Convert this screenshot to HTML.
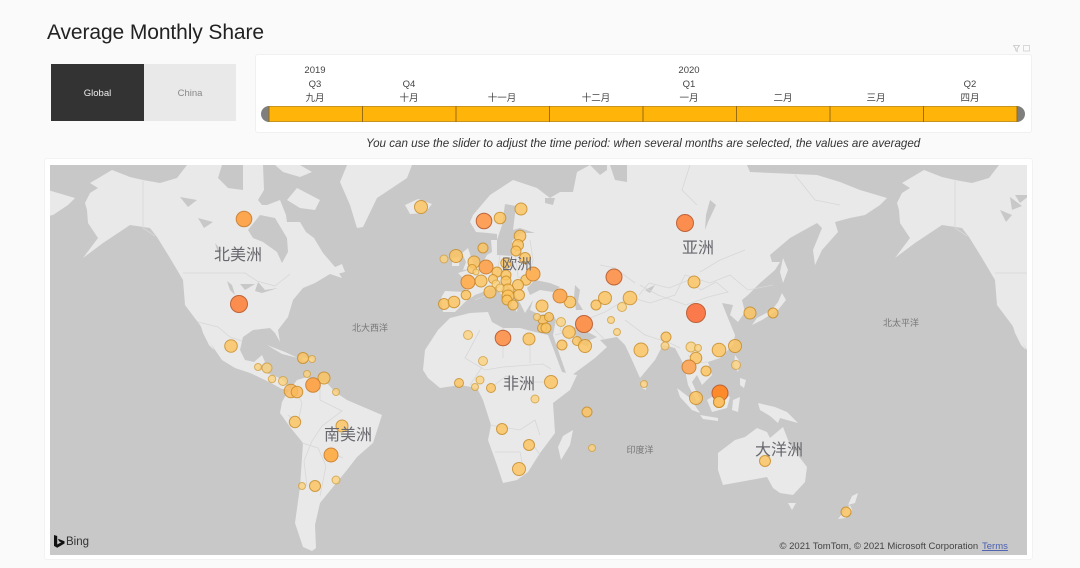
<!DOCTYPE html>
<html><head><meta charset="utf-8"><style>
html,body{margin:0;padding:0;width:1080px;height:568px;overflow:hidden;background:#fafafa}
body{font-family:"Liberation Sans","Noto Sans CJK SC",sans-serif}
#w{position:absolute;left:0;top:0;width:1080px;height:568px;filter:blur(.35px)}
.a{position:absolute}
.t{position:absolute;font-size:9.5px;color:#444;transform:translateX(-50%);white-space:nowrap;line-height:12px}
svg text{font-family:"Liberation Sans","Noto Sans CJK SC",sans-serif}
</style></head><body><div id="w">
<div class="a" style="left:47px;top:19px;font-size:21px;line-height:28px;color:#222;letter-spacing:-.1px;white-space:nowrap">Average Monthly Share</div>
<div class="a" style="left:51px;top:64px;width:93px;height:57px;background:#333;color:#eee;font-size:9.5px;line-height:60px;text-align:center">Global</div>
<div class="a" style="left:144px;top:64px;width:92px;height:57px;background:#e9e9e9;color:#888;font-size:9.5px;line-height:60px;text-align:center">China</div>
<div class="a" style="left:255px;top:54px;width:775px;height:77px;background:#fff;border:1px solid #f0f0f0;border-radius:3px"></div>
<svg class="a" style="left:1012px;top:44px" width="20" height="10"><path d="M1.500 1.500h6l-2.300 3v3l-1.400-1v-2z" fill="none" stroke="#c4c4c4" stroke-width=".8"/><rect x="11.500" y="1.500" width="6" height="5.500" fill="none" stroke="#d0d0d0" stroke-width=".8"/></svg>
<div class="t" style="left:315px;top:65px">2019</div><div class="t" style="left:315px;top:79px">Q3</div><div class="t" style="left:315px;top:93px">九月</div>
<div class="t" style="left:409px;top:79px">Q4</div><div class="t" style="left:409px;top:93px">十月</div>
<div class="t" style="left:502px;top:93px">十一月</div><div class="t" style="left:596px;top:93px">十二月</div>
<div class="t" style="left:689px;top:65px">2020</div><div class="t" style="left:689px;top:79px">Q1</div><div class="t" style="left:689px;top:93px">一月</div>
<div class="t" style="left:783px;top:93px">二月</div><div class="t" style="left:876px;top:93px">三月</div>
<div class="t" style="left:970px;top:79px">Q2</div><div class="t" style="left:970px;top:93px">四月</div>
<svg class="a" style="left:255px;top:100px" width="776" height="28">
<path d="M14 6a8 8 0 0 0 0 16z" fill="#7f7f7f"/>
<path d="M762 6a8 8 0 0 1 0 16z" fill="#7f7f7f"/>
<rect x="14" y="6" width="748" height="16" fill="#ffb40a"/>
<path d="M14 6.400h748M14 21.600h748" stroke="#b58a28" stroke-width=".8"/>
<path d="M107.500 6v16M201 6v16M294.500 6v16M388 6v16M481.500 6v16M575 6v16M668.500 6v16M14 6v16M762 6v16" stroke="#9a6c10" stroke-width="1"/>
</svg>
<div class="a" style="left:366px;top:136px;font-size:11.6px;line-height:15px;font-style:italic;color:#333;white-space:nowrap">You can use the slider to adjust the time period: when several months are selected, the values are averaged</div>
<div class="a" style="left:44px;top:158px;width:987px;height:400px;background:#fff;border:1px solid #f2f2f2;border-radius:3px"></div>
<svg class="a" style="left:0;top:0" width="1080" height="568" viewBox="0 0 1080 568">
<defs>
<clipPath id="m"><rect x="50" y="165" width="977" height="390"/></clipPath>
<g id="na">
<polygon points="85,203 90,193 98,188 90,183 112,170 130,177 143,180 160,183 177,178 187,165 222,165 218,178 228,188 243,190 243,165 263,165 264,190 258,200 262,205 267,205 280,200 286,215 287,222 300,222 306,232 314,238 323,253 335,267 342,278 330,274 315,283 303,288 293,300 288,317 278,330 280,342 275,333 270,328 253,330 243,337 240,350 245,360 254,362 262,355 265,362 259,368 266,373 275,376 283,380 290,389 282,389 267,381 250,373 235,368 222,360 213,347 200,325 185,305 183,280 170,258 157,237 150,228 130,225 115,235 103,243 83,258 98,238 88,223 87,210"/>
<polygon points="200,323 206,333 214,350 209,345 203,333"/>
<polygon points="267,345 285,352 298,358 282,354"/>
<polygon points="302,357 312,359 315,362 303,361"/>
<polygon points="297,188 320,200 315,210 300,208 287,200"/>
<polygon points="275,165 300,165 312,172 300,177 283,172"/>
<polygon points="333,268 342,264 345,272 337,274"/>
</g>
<g id="ea">
<polygon points="443,312 441,298 445,291 465,292 467,282 458,273 468,270 483,262 487,255 492,252 491,240 497,240 497,234 488,233 476,232 470,222 473,215 490,195 513,180 537,188 550,198 560,192 573,192 577,172 590,165 600,175 607,170 607,165 610,165 615,180 627,182 627,165 747,165 750,172 817,175 840,182 860,190 887,198 880,205 865,215 850,218 835,222 838,232 822,250 815,265 813,250 822,228 817,223 790,238 770,255 772,262 780,262 775,270 760,283 748,295 742,300 745,312 738,322 730,315 733,305 722,303 728,318 735,335 733,345 720,358 708,362 712,375 702,385 697,375 692,382 700,400 697,402 688,385 684,365 675,348 663,345 655,360 640,378 632,360 625,345 617,337 600,340 607,347 595,358 572,375 566,373 558,350 553,335 556,320 552,313 540,315 530,310 533,300 525,313 520,303 512,290 504,283 510,293 518,305 517,312 510,303 497,290 490,288 483,292 475,295 465,302 455,312"/>
<polygon points="783,258 788,270 783,283 780,272"/>
<polygon points="782,293 786,300 778,310 762,320 752,325 757,318 772,310 778,302"/>
</g>
</defs>
<rect x="50" y="165" width="977" height="390" fill="#c8c8c8"/>
<g clip-path="url(#m)">
<g fill="#e9e9e9">
<use href="#na"/><use href="#na" transform="translate(812,0)"/>
<use href="#ea"/><use href="#ea" transform="translate(-812,0)"/>
<polygon points="347,165 412,165 407,178 377,198 363,227 357,228 350,205 340,182"/>
<polygon points="405,205 418,199 432,204 425,213 410,214"/>
<polygon points="462,253 468,248 472,260 476,268 463,270 466,262"/>
<polygon points="452,258 460,257 459,266 452,266"/>
<polygon points="287,393 297,380 307,377 327,383 335,392 347,400 382,415 373,443 357,457 347,470 333,487 320,503 315,525 316,548 312,551 303,547 295,523 300,487 303,443 290,427 280,413 282,402"/>
<polygon points="423,370 425,350 438,330 450,318 470,313 488,312 492,322 503,328 520,328 535,332 548,335 552,345 562,372 577,375 570,390 553,403 555,433 540,453 528,472 517,480 503,483 497,465 488,440 491,425 483,400 477,388 460,385 440,388 428,378"/>
<polygon points="573,430 570,445 561,460 558,447 563,436"/>
<polygon points="641,380 646,384 646,390 642,388"/>
<polygon points="677,388 690,398 700,413 692,410 680,397"/>
<polygon points="707,400 718,393 730,397 727,408 712,412"/>
<polygon points="700,415 718,418 718,421 703,419"/>
<polygon points="733,400 740,397 738,412 732,410"/>
<polygon points="758,403 775,407 787,412 798,423 787,420 780,418 778,423 770,416 760,410"/>
<polygon points="735,355 740,362 738,372 734,366"/>
<polygon points="740,378 746,380 744,388 740,385"/>
<polygon points="718,453 735,440 745,437 757,428 767,432 770,438 783,427 790,445 807,467 805,482 793,495 780,493 773,488 767,477 745,481 723,485 718,470"/>
<polygon points="788,503 796,503 792,510"/>
<polygon points="858,493 855,503 848,505 852,496"/>
<polygon points="850,505 842,514 838,519 846,518 852,510"/>
</g>
<g fill="#c8c8c8">
<polygon points="248,230 260,215 275,218 287,238 288,252 282,263 277,252 263,242 253,238"/>
<polygon points="497,255 512,256 512,241 522,233 535,233 520,228 513,230 516,206 505,204 502,225 497,240"/>
<polygon points="545,198 555,198 553,205 545,203"/>
<polygon points="527,288 535,280 550,283 560,287 553,292 540,290 530,295"/>
<polygon points="575,285 580,290 578,302 583,310 576,310 574,298"/>
<polygon points="572,327 580,328 597,337 590,340 588,347 578,342"/>
<polygon points="227,281 232,285 235,295 230,290"/>
<polygon points="240,284 255,284 245,290"/>
<polygon points="258,282 265,290 278,288 262,293 255,291"/>
<polygon points="198,218 213,222 204,228"/>
<polygon points="180,197 197,200 188,207"/>
<polygon points="215,243 222,251 218,253"/>
<polygon points="645,290 655,285 650,293"/>
<polygon points="710,200 716,205 708,222 705,230 706,215"/>
<polygon points="1010,197 1022,206 1012,210"/>
<polygon points="1000,210 1012,215 1006,222"/>
<polygon points="1030,195 1015,195 1020,203"/>
</g>
<g fill="none" stroke="#d7d7d7" stroke-width=".8">
<path d="M143 181V228l12 8M183 273H245l12 8 18 5 15-12M198 322l20 5 12 10 12 4M257 366l4 5M288 389l8 2 6 12-4 20-10-8M320 385l0 15 12 6 10 5-20 15-10 15-8 20 3 25M325 450l18 8M302 443l16 5 8 18-6 30"/>
<path d="M475 300l10-4M500 255l-3 20 8 6M515 252l3 25 15 5M530 240l3 20-5 20M480 330l-15 28 20 12 18-3 40-3 8 5M503 328l0 30M530 335v28M470 385l12-18M491 388l15-12 20 6 18 0M490 425l30 5 15-10 5 15M495 452l25 0 3 15M530 440l10 15"/>
<path d="M555 335l30-8M575 345l-15-15 3-10M605 340l-20-20 20-8 25-15 20 6 25-8 10-20 25 8 20-8 18 15 25-5M640 285l18 10 28 10 22-8 20-5-12-10-15 8-12-10-20 8-20-5-10 12M625 320l20 15 25 8 10 5M688 355l8 8 12-1M840 205l-25-5-20-25M690 165l-8 25 15 15M745 250l-25 10-20 12M600 265l15 3 20 15"/>
<path d="M955 181V228l12 8M995 273H1030"/>
</g>
<g stroke-width="1">
<g fill="#fdc460" fill-opacity=".82" stroke="#c68a24" stroke-opacity=".8">
<circle cx="231" cy="346" r="6.300"/><circle cx="303" cy="358" r="5.500"/><circle cx="324" cy="378" r="6"/><circle cx="291" cy="391" r="6.800" fill="#fdb85a"/><circle cx="297" cy="392" r="5.800" fill="#fdb85a"/><circle cx="295" cy="422" r="5.700"/><circle cx="342" cy="426" r="6"/><circle cx="315" cy="486" r="5.500"/><circle cx="421" cy="207" r="6.500"/><circle cx="500" cy="218" r="5.800"/><circle cx="521" cy="209" r="6"/><circle cx="520" cy="236" r="5.800"/><circle cx="518" cy="245" r="5.500"/><circle cx="516" cy="251" r="5"/><circle cx="483" cy="248" r="5"/><circle cx="456" cy="256" r="6.500"/><circle cx="474" cy="262" r="6"/><circle cx="472" cy="269" r="4.500"/><circle cx="506" cy="263" r="5.200"/><circle cx="525" cy="258" r="5.500"/><circle cx="497" cy="272" r="5"/><circle cx="506" cy="275" r="5"/><circle cx="481" cy="281" r="6"/><circle cx="493" cy="279" r="4.500"/><circle cx="506" cy="281" r="5"/><circle cx="526" cy="280" r="5.200"/><circle cx="518" cy="285" r="5.500"/><circle cx="508" cy="290" r="6"/><circle cx="490" cy="292" r="6"/><circle cx="466" cy="295" r="4.800"/><circle cx="519" cy="295" r="5.500"/><circle cx="508" cy="296" r="6"/><circle cx="507" cy="300" r="5"/><circle cx="513" cy="305" r="5"/><circle cx="444" cy="304" r="5.500"/><circle cx="454" cy="302" r="5.800"/><circle cx="542" cy="306" r="6"/><circle cx="570" cy="302" r="5.800"/><circle cx="596" cy="305" r="5"/><circle cx="605" cy="298" r="6.500"/><circle cx="630" cy="298" r="6.800"/><circle cx="543" cy="320" r="4.800"/><circle cx="549" cy="317" r="4.500"/><circle cx="542" cy="328" r="4.500"/><circle cx="546" cy="328" r="5"/><circle cx="569" cy="332" r="6.300"/><circle cx="577" cy="341" r="4.500"/><circle cx="585" cy="346" r="6.500"/><circle cx="562" cy="345" r="5"/><circle cx="529" cy="339" r="6"/><circle cx="641" cy="350" r="7"/><circle cx="666" cy="337" r="5"/><circle cx="694" cy="282" r="6"/><circle cx="750" cy="313" r="6"/><circle cx="773" cy="313" r="5"/><circle cx="719" cy="350" r="6.800"/><circle cx="735" cy="346" r="6.500"/><circle cx="696" cy="358" r="5.800"/><circle cx="706" cy="371" r="5"/><circle cx="696" cy="398" r="6.500"/><circle cx="719" cy="402" r="5.500"/><circle cx="765" cy="461" r="5.500"/><circle cx="846" cy="512" r="5"/><circle cx="551" cy="382" r="6.500"/><circle cx="587" cy="412" r="5"/><circle cx="502" cy="429" r="5.500"/><circle cx="529" cy="445" r="5.500"/><circle cx="519" cy="469" r="6.500"/><circle cx="491" cy="388" r="4.500"/><circle cx="459" cy="383" r="4.500"/>
</g>
<g fill="#fbd27e" fill-opacity=".8" stroke="#cf9c3e" stroke-opacity=".75">
<circle cx="312" cy="359" r="3.500"/><circle cx="258" cy="367" r="3.500"/><circle cx="267" cy="368" r="5"/><circle cx="272" cy="379" r="3.700"/><circle cx="283" cy="381" r="4.500"/><circle cx="307" cy="374" r="3.500"/><circle cx="336" cy="392" r="3.500"/><circle cx="336" cy="480" r="4"/><circle cx="302" cy="486" r="3.500"/><circle cx="444" cy="259" r="4"/><circle cx="476" cy="272" r="3"/><circle cx="496" cy="284" r="4"/><circle cx="500" cy="288" r="4"/><circle cx="622" cy="307" r="4.500"/><circle cx="537" cy="317" r="3.500"/><circle cx="561" cy="322" r="4.500"/><circle cx="611" cy="320" r="3.500"/><circle cx="617" cy="332" r="3.500"/><circle cx="468" cy="335" r="4.500"/><circle cx="483" cy="361" r="4.500"/><circle cx="665" cy="346" r="4"/><circle cx="691" cy="347" r="5"/><circle cx="698" cy="348" r="3.500"/><circle cx="736" cy="365" r="4.500"/><circle cx="480" cy="380" r="4"/><circle cx="475" cy="387" r="3.500"/><circle cx="535" cy="399" r="4"/><circle cx="592" cy="448" r="3.500"/><circle cx="644" cy="384" r="3.500"/>
</g>
<g stroke="#c47a2a" stroke-opacity=".85">
<circle cx="244" cy="219" r="7.800" fill="#fca650"/><circle cx="331" cy="455" r="7" fill="#fdb050"/><circle cx="313" cy="385" r="7.300" fill="#fca650"/><circle cx="468" cy="282" r="7" fill="#fdb25a"/><circle cx="533" cy="274" r="7" fill="#fdb25a"/><circle cx="486" cy="267" r="7" fill="#fca85a"/><circle cx="560" cy="296" r="7" fill="#fbac5a"/><circle cx="689" cy="367" r="7" fill="#fbaa62"/>
</g>
<g stroke="#b85a30" stroke-opacity=".9">
<circle cx="239" cy="304" r="8.500" fill="#fb8d4e"/><circle cx="685" cy="223" r="8.500" fill="#fb8d4e"/><circle cx="696" cy="313" r="9.500" fill="#fa7a4c"/><circle cx="720" cy="393" r="8" fill="#ff8a2c"/><circle cx="584" cy="324" r="8.500" fill="#fb9450"/><circle cx="614" cy="277" r="8" fill="#fb9a58"/><circle cx="503" cy="338" r="7.800" fill="#fb9a58"/><circle cx="484" cy="221" r="7.800" fill="#fca05a"/>
<circle cx="719" cy="402" r="5.500" fill="#fdc065" stroke="#c68a24"/>
</g>
</g>
<g fill="#68686e" font-size="16" text-anchor="middle">
<text x="238" y="260">北美洲</text><text x="517" y="269" font-size="15">欧洲</text><text x="698" y="253">亚洲</text><text x="519" y="389">非洲</text><text x="348" y="440">南美洲</text><text x="779" y="455">大洋洲</text>
</g>
<g fill="#767678" font-size="9" text-anchor="middle">
<text x="370" y="331">北大西洋</text><text x="901" y="326">北太平洋</text><text x="640" y="453">印度洋</text>
</g>
<path d="M54 535l3.200 1v8.500l4-2.300-2.200-1-1-2.500 6.500 2.500v2.300l-7.300 4.200-3.200-1.800z" fill="#111"/>
<text x="66" y="545" font-size="11.500" fill="#333">Bing</text>
<text x="779.500" y="549" font-size="9.500" fill="#444">© 2021 TomTom, © 2021 Microsoft Corporation</text>
<text x="982" y="549" font-size="9.500" fill="#4a5fb0" text-decoration="underline">Terms</text>
</g>
</svg>
</div></body></html>
